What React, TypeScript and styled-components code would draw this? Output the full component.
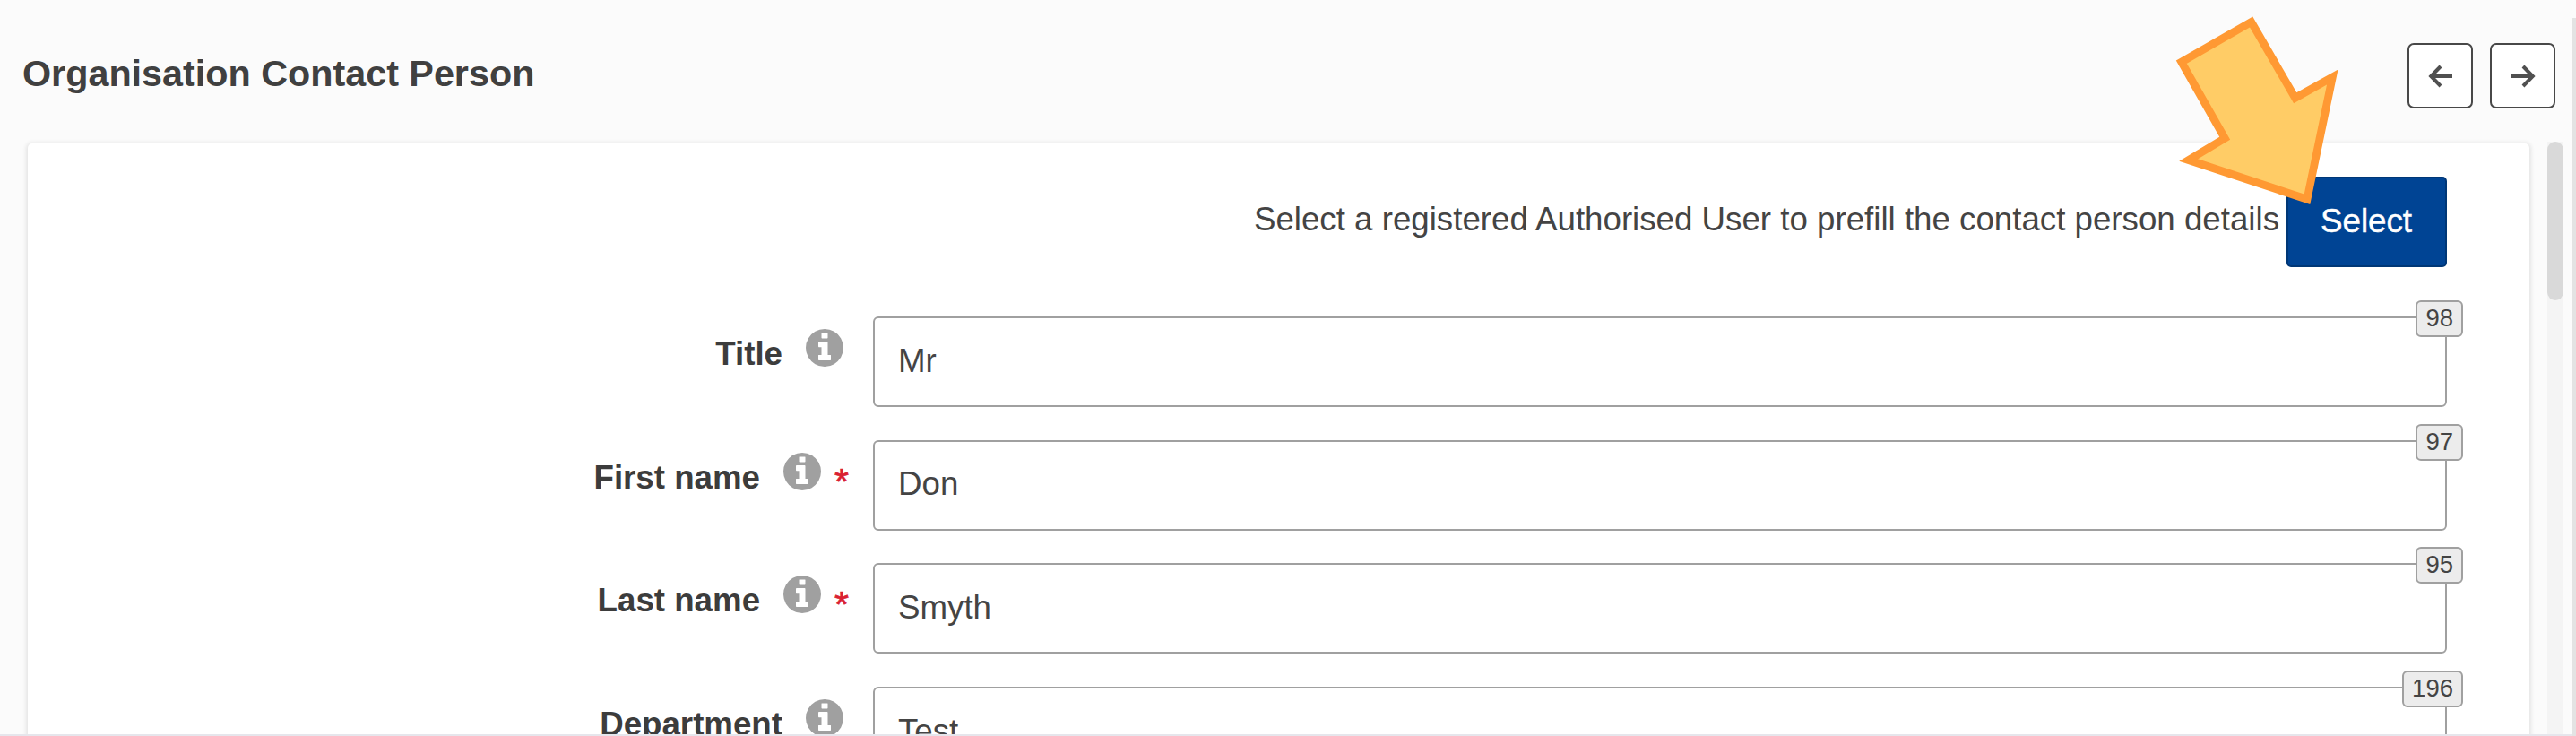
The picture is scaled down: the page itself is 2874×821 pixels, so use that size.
import styled, { createGlobalStyle } from "styled-components";

const GlobalStyle = createGlobalStyle`
  * {
    box-sizing: border-box;
  }

  body {
    margin: 0;
    background: #fbfbfb;
    color: #444;
    font-family: "Liberation Sans", Arial, sans-serif;
    font-size: 36.7px;
    overflow: hidden;
  }
`;

const Page = styled.div`
  display: flex;
  height: 821px;
  overflow: hidden;
  position: relative;
`;

const Main = styled.div`
  flex: 1;
  min-width: 0;
  display: flex;
  flex-direction: column;
  border-bottom: 2px solid #e6e6ec;
`;

const WindowEdge = styled.div`
  width: 4px;
  margin-top: 20px;
  background: #e3e3e3;
`;

const Header = styled.header`
  flex: none;
  display: flex;
  align-items: center;
  justify-content: space-between;
  height: 160px;
  padding: 0 19px 0 25px;
`;

const Heading = styled.h1`
  margin: 0 0 -3px;
  font-size: 41.3px;
  line-height: 46px;
  font-weight: bold;
  color: #404040;
`;

const NavButtons = styled.div`
  display: flex;
  gap: 19px;
  padding-top: 9px;
`;

const NavButton = styled.button`
  display: flex;
  align-items: center;
  justify-content: center;
  width: 73px;
  height: 73px;
  padding: 0;
  background: #fff;
  border: 2px solid #484848;
  border-radius: 7px;
`;

const Content = styled.div`
  flex: 1;
  min-height: 0;
  display: flex;
  padding-left: 31px;
`;

const CardScroll = styled.div`
  flex: 1;
  display: flex;
  margin: -6px 0 0 -6px;
  padding: 6px 0 0 6px;
  overflow: hidden;
`;

const Card = styled.section`
  flex: none;
  width: 2791px;
  height: 1200px;
  padding: 37px 92px 0 0;
  background: #fff;
  border-radius: 5px;
  box-shadow: 0 1px 4px 2px #e4e4e4;
`;

const ScrollTrack = styled.div`
  flex: none;
  width: 18px;
  margin: -2px 10px 0 0;
  background: #f4f4f4;
`;

const ScrollThumb = styled.div`
  height: 177px;
  border-radius: 9px;
  background: #d9d9d9;
`;

const Prefill = styled.div`
  display: flex;
  align-items: center;
  justify-content: flex-end;
  gap: 8px;
  height: 101px;
`;

const PrefillText = styled.span`
  padding-bottom: 6px;
  line-height: 42px;
  white-space: nowrap;
`;

const SelectButton = styled.button`
  width: 179px;
  height: 101px;
  padding: 0 1px 2px 0;
  border: 2px solid #003776;
  border-radius: 5px;
  background: #004494;
  color: #fff;
  font: inherit;
  -webkit-text-stroke: 0.5px #fff;
`;

const Fields = styled.div`
  display: flex;
  flex-direction: column;
  gap: 36.7px;
  margin-top: 55px;
`;

const Row = styled.div`
  display: flex;
  height: 101px;
`;

const LabelCell = styled.div<{ $required?: boolean }>`
  flex: none;
  display: flex;
  justify-content: flex-end;
  width: 943px;
  padding-right: ${(props) => (props.$required ? 27 : 33)}px;
`;

const Label = styled.label`
  margin-right: 26px;
  padding-top: 21px;
  line-height: 42px;
  font-weight: bold;
  color: #3c3c3c;
`;

const InfoIcon = styled.svg`
  flex: none;
  width: 42px;
  height: 42px;
  margin-top: 14px;
  fill: #a0a0a0;
`;

const Required = styled.span`
  margin-left: 15px;
  padding-top: 23px;
  font-size: 41px;
  line-height: 46px;
  color: #da2131;
  -webkit-text-stroke: 0.7px #da2131;
`;

const Field = styled.div`
  flex: 1;
  position: relative;
`;

const Input = styled.input`
  display: block;
  width: 100%;
  height: 101px;
  padding: 0 26px 2px;
  border: 2px solid #a0a0a0;
  border-radius: 6px;
  background: #fff;
  color: #444;
  font: inherit;
  outline: none;
`;

const Counter = styled.span`
  position: absolute;
  top: -18px;
  right: -18px;
  height: 41px;
  padding: 0 9px;
  border: 2px solid #a0a0a0;
  border-radius: 6px;
  background: #ececec;
  font-size: 27.5px;
  line-height: 36px;
`;

const Pointer = styled.svg`
  position: absolute;
  left: 2374px;
  top: 0;
  pointer-events: none;
`;

const fields = [
  { label: "Title", value: "Mr", left: 98 },
  { label: "First name", value: "Don", left: 97, required: true },
  { label: "Last name", value: "Smyth", left: 95, required: true },
  { label: "Department", value: "Test", left: 196 },
];

const Info = () => (
  <InfoIcon viewBox="128 128 1536 1536">
    <path d="M1152 1376v-160q0-14-9-23t-23-9h-96v-512q0-14-9-23t-23-9h-320q-14 0-23 9t-9 23v160q0 14 9 23t23 9h96v320h-96q-14 0-23 9t-9 23v160q0 14 9 23t23 9h448q14 0 23-9t9-23zm-128-896v-160q0-14-9-23t-23-9h-192q-14 0-23 9t-9 23v160q0 14 9 23t23 9h192q14 0 23-9t9-23zm640 416q0 209-103 385.5t-279.5 279.5-385.5 103-385.5-103-279.5-279.5-103-385.5 103-385.5 279.5-279.5 385.5-103 385.5 103 279.5 279.5 103 385.5z" />
  </InfoIcon>
);

const ArrowIcon = ({ right }: { right?: boolean }) => (
  <svg width="28" height="26" viewBox="0 0 28 26" fill="none" stroke="#505050" strokeWidth="4">
    <path
      d="M27 13H3M14 2L3.2 13L14 24"
      transform={right ? "translate(28 0) scale(-1 1)" : undefined}
    />
  </svg>
);

export default function App() {
  return (
    <>
      <GlobalStyle />
      <Page>
        <Main>
          <Header>
            <Heading>Organisation Contact Person</Heading>
            <NavButtons>
              <NavButton aria-label="Previous">
                <ArrowIcon />
              </NavButton>
              <NavButton aria-label="Next">
                <ArrowIcon right />
              </NavButton>
            </NavButtons>
          </Header>
          <Content>
            <CardScroll>
              <Card>
                <Prefill>
                  <PrefillText>
                    Select a registered Authorised User to prefill the contact person details
                  </PrefillText>
                  <SelectButton>Select</SelectButton>
                </Prefill>
                <Fields>
                  {fields.map((field) => (
                    <Row key={field.label}>
                      <LabelCell $required={field.required}>
                        <Label>{field.label}</Label>
                        <Info />
                        {field.required && <Required>*</Required>}
                      </LabelCell>
                      <Field>
                        <Input defaultValue={field.value} />
                        <Counter>{field.left}</Counter>
                      </Field>
                    </Row>
                  ))}
                </Fields>
              </Card>
            </CardScroll>
            <ScrollTrack>
              <ScrollThumb />
            </ScrollTrack>
          </Content>
        </Main>
        <WindowEdge />
        <Pointer width="240" height="240" viewBox="0 0 240 240">
          <path
            d="M137.7 24.5L186.7 109.2L228.3 86L200 222.3L67.7 178.5L108.2 154.2L59.8 69.2Z"
            fill="#ffcc66"
            stroke="#ff9933"
            strokeWidth="8.8"
          />
        </Pointer>
      </Page>
    </>
  );
}
